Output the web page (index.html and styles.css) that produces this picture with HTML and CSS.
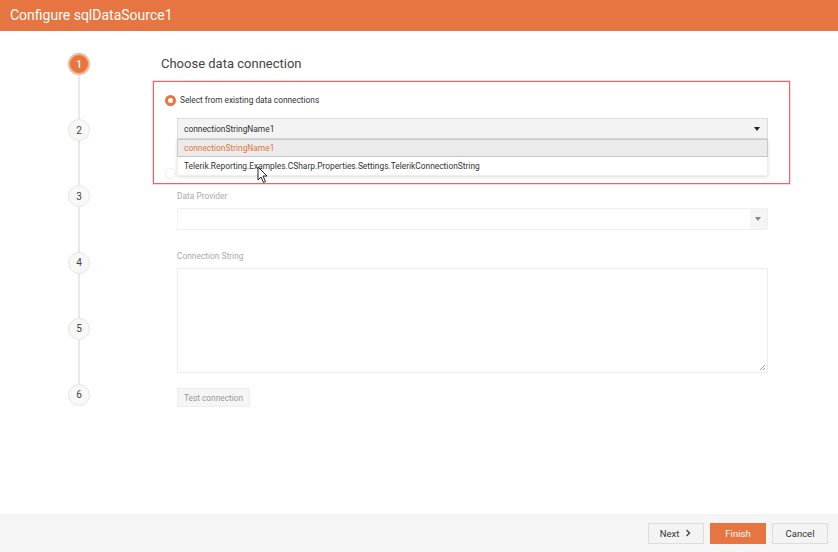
FILE: index.html
```html
<!DOCTYPE html>
<html>
<head>
<meta charset="utf-8">
<link rel="stylesheet" href="styles.css">
</head>
<body>
<div class="header">Configure sqlDataSource1</div>
<div class="main">
  <div class="steps">
    <div class="step active">1</div>
    <div class="step">2</div>
    <div class="step">3</div>
    <div class="step">4</div>
    <div class="step">5</div>
    <div class="step">6</div>
    <div class="track"></div>
  </div>
  <div class="content">
    <div class="title">Choose data connection</div>
    <div class="radio-row first">
      <span class="radio checked"></span>
      <span class="radio-label">Select from existing data connections</span>
    </div>
    <div class="combo-wrap">
      <div class="combo">
        <span>connectionStringName1</span>
        <span class="caret"></span>
      </div>
      <div class="popup">
        <div class="item selected">connectionStringName1</div>
        <div class="item">Telerik.Reporting.Examples.CSharp.Properties.Settings.TelerikConnectionString</div>
      </div>
    </div>
    <div class="radio-row second">
      <span class="radio"></span>
      <span class="radio-label faded">Build new data connection</span>
    </div>
    <div class="field-label">Data Provider</div>
    <div class="select">
      <span class="select-btn"><span class="caret light"></span></span>
    </div>
    <div class="field-label cs">Connection String</div>
    <div class="textarea">
      <svg class="grip" width="8" height="8" viewBox="0 0 8 8"><path d="M7 2 L2 7 M7 5 L5 7" stroke="#999" stroke-width="1"/></svg>
    </div>
    <div class="test-btn">Test connection</div>
    <div class="highlight"></div>
    <svg class="cursor" width="12" height="18" viewBox="0 0 12 18"><path d="M1 1 L1 14 L4 11 L6.5 16.5 L8.5 15.5 L6 10 L10 10 Z" fill="#fff" stroke="#222" stroke-width="1" stroke-linejoin="round"/></svg>
  </div>
</div>
<div class="footer">
  <div class="btn">Next <svg width="8" height="8" viewBox="0 0 8 8"><path d="M2.5 1 L5.5 4 L2.5 7" fill="none" stroke="#444" stroke-width="1.4"/></svg></div>
  <div class="btn primary">Finish</div>
  <div class="btn">Cancel</div>
</div>
</body>
</html>
```

FILE: styles.css
```css
* { box-sizing: border-box; }
html, body { margin: 0; padding: 0; }
body {
  width: 838px;
  height: 552px;
  font-family: Roboto, "Liberation Sans", sans-serif;
  color: #333;
  background: #fff;
  overflow: hidden;
  display: flex;
  flex-direction: column;
}
.header {
  height: 31px;
  background: #e77542;
  color: #fff;
  font-size: 14px;
  line-height: 31px;
  padding-left: 10px;
  flex: none;
}
.main {
  flex: 1;
  display: flex;
}
.steps {
  width: 158px;
  position: relative;
  display: flex;
  flex-direction: column;
  align-items: center;
  padding-top: 22px;
  gap: 44.2px;
}
.track {
  position: absolute;
  left: 78px;
  top: 40px;
  height: 330px;
  width: 2px;
  background: #e9e9e9;
  z-index: 0;
}
.step {
  position: relative;
  z-index: 1;
  width: 22px;
  height: 22px;
  border-radius: 50%;
  background: #f8f8f8;
  border: 1px solid #e6e6e6;
  font-size: 10px;
  color: #444;
  display: flex;
  align-items: center;
  justify-content: center;
}
.step.active {
  background: #e77542;
  border: 2px solid #f2b696;
  color: #fff;
  font-weight: 500;
}
.content {
  position: relative;
  flex: 1;
  padding-left: 3px;
  display: flex;
  flex-direction: column;
}
.title {
  margin-top: 25px;
  font-size: 13px;
  line-height: 16px;
  color: #444;
  font-weight: 400;
}
.radio-row {
  display: flex;
  align-items: center;
  height: 12px;
  margin-left: 4px;
  gap: 4px;
  font-size: 8.3px;
}
.radio-row.first { margin-top: 22px; }
.radio-row.second { margin-top: 28px; }
.radio {
  width: 11px;
  height: 11px;
  border-radius: 50%;
  border: 1px solid #eee;
  background: #fff;
}
.radio.checked {
  border: 3px solid #e77542;
}
.radio-label { color: #333; }
.radio-label.faded { color: #ccc; }
.combo-wrap {
  position: relative;
  margin-left: 16px;
  margin-top: 12px;
  width: 591px;
  z-index: 2;
}
.combo {
  height: 21px;
  background: #f3f3f3;
  border: 1px solid #dcdcdc;
  display: flex;
  align-items: center;
  justify-content: space-between;
  padding: 0 6px 0 6px;
  font-size: 8.4px;
  color: #333;
}
.caret {
  width: 0;
  height: 0;
  border-left: 3.5px solid transparent;
  border-right: 3.5px solid transparent;
  border-top: 4px solid #222;
  margin-right: 1px;
}
.caret.light { border-top-color: #888; }
.popup {
  position: absolute;
  left: 0;
  top: 21px;
  width: 591px;
  background: #fff;
  box-shadow: 0 1px 3px rgba(0,0,0,0.15);
  border: 1px solid #eee;
  border-top: none;
}
.item {
  height: 18px;
  line-height: 18px;
  padding-left: 6px;
  font-size: 8.4px;
  color: #333;
}
.item.selected {
  background: #ebebeb;
  border: 1px solid #c9c9c9;
  color: #e77542;
  line-height: 16px;
  margin: 0 -1px;
}
.field-label {
  margin-left: 16px;
  margin-top: 11px;
  font-size: 8.4px;
  line-height: 12px;
  color: #aaa;
}
.field-label.cs { margin-top: 20px; }
.select {
  margin-left: 16px;
  margin-top: 6px;
  width: 591px;
  height: 22px;
  border: 1px solid #f0f0f0;
  background: #fff;
  display: flex;
  justify-content: flex-end;
}
.select-btn {
  width: 17px;
  background: #f5f5f5;
  display: flex;
  align-items: center;
  justify-content: center;
}
.textarea {
  position: relative;
  margin-left: 16px;
  margin-top: 6px;
  width: 591px;
  height: 105px;
  border: 1px solid #ececec;
  background: #fff;
}
.grip {
  position: absolute;
  right: 1px;
  bottom: 1px;
}
.test-btn {
  margin-left: 16px;
  margin-top: 15px;
  align-self: flex-start;
  height: 19px;
  line-height: 19px;
  padding: 0 6px;
  font-size: 8.3px;
  color: #999;
  background: #f5f5f5;
  border: 1px solid #eee;
}
.highlight {
  position: absolute;
  left: -5px;
  top: 50px;
  width: 637px;
  height: 103px;
  border: 1px solid #e8636b;
  box-shadow: 0 0 0 0.5px rgba(236,106,114,0.5);
  pointer-events: none;
  z-index: 3;
}
.cursor {
  position: absolute;
  left: 99px;
  top: 135px;
  z-index: 4;
}
.footer {
  flex: none;
  height: 38px;
  background: #f5f5f5;
  display: flex;
  justify-content: flex-end;
  align-items: center;
  gap: 6px;
  padding-right: 10px;
}
.btn {
  width: 56px;
  height: 21px;
  border: 1px solid #ddd;
  background: #f3f3f3;
  font-size: 9.5px;
  color: #333;
  display: flex;
  align-items: center;
  justify-content: center;
  gap: 5px;
}
.btn.primary {
  background: #e77542;
  border-color: #e77542;
  color: #fff;
}
```
